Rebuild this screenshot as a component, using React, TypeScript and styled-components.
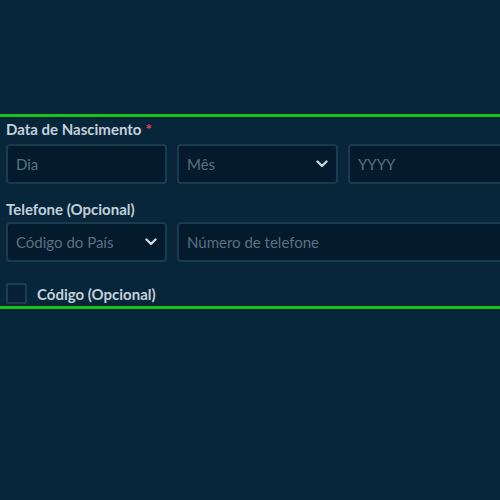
import React from "react";
import styled, { createGlobalStyle } from "styled-components";

const Global = createGlobalStyle`
  html, body { margin: 0; padding: 0; background: #07263a; overflow: hidden; }
  body { font-family: Lato, "Open Sans", sans-serif; }
`;

const Page = styled.div`
  width: 500px;
  height: 500px;
  background: #07263a;
  padding-top: 114px;
  box-sizing: border-box;
  overflow: hidden;
`;

const Form = styled.section`
  width: 560px;
  border-top: 3px solid #17c21a;
  border-bottom: 3px solid #17c21a;
  padding: 3px 0 2px 6px;
  box-sizing: border-box;
`;

const Label = styled.div<{ $mt?: number }>`
  margin-top: ${(p) => p.$mt ?? 0}px;
  font-size: 15px;
  line-height: 18px;
  font-weight: 700;
  color: #c3d0da;
`;

const Req = styled.span`
  color: #e2425c;
  margin-left: 4px;
`;

const Row = styled.div<{ $mt: number }>`
  margin-top: ${(p) => p.$mt}px;
  display: grid;
  grid-template-columns: 161px 161px 161px;
  gap: 10px;
`;

const Field = styled.div<{ $span?: number }>`
  grid-column: span ${(p) => p.$span ?? 1};
  height: 40px;
  box-sizing: border-box;
  border: 2px solid #1a3b4e;
  border-radius: 4px;
  background: #031b2c;
  display: flex;
  align-items: center;
  justify-content: space-between;
  padding: 0 8px 0 8px;
  font-size: 15px;
  color: #5a7282;
`;

const Chevron = () => (
  <svg width="12" height="8" viewBox="0 0 12 8">
    <polyline points="1.5,1.5 6,6 10.5,1.5" fill="none" stroke="#c8d6de" strokeWidth="2.4" strokeLinecap="round" strokeLinejoin="round" />
  </svg>
);

const CheckRow = styled.div`
  margin-top: 21px;
  display: flex;
  align-items: center;
  gap: 10px;
`;

const Box = styled.div`
  width: 21px;
  height: 21px;
  box-sizing: border-box;
  border: 2px solid #1d3e51;
  border-radius: 2px;
  background: #072236;
`;

const CheckLabel = styled.span`
  font-size: 15px;
  font-weight: 700;
  color: #c3d0da;
`;

export default function App() {
  return (
    <>
      <Global />
      <Page>
        <Form>
          <Label>
            Data de Nascimento<Req>*</Req>
          </Label>
          <Row $mt={6}>
            <Field>Dia</Field>
            <Field>
              Mês
              <Chevron />
            </Field>
            <Field>YYYY</Field>
          </Row>
          <Label $mt={16}>Telefone (Opcional)</Label>
          <Row $mt={4}>
            <Field>
              Código do País
              <Chevron />
            </Field>
            <Field $span={2}>Número de telefone</Field>
          </Row>
          <CheckRow>
            <Box />
            <CheckLabel>Código (Opcional)</CheckLabel>
          </CheckRow>
        </Form>
      </Page>
    </>
  );
}
